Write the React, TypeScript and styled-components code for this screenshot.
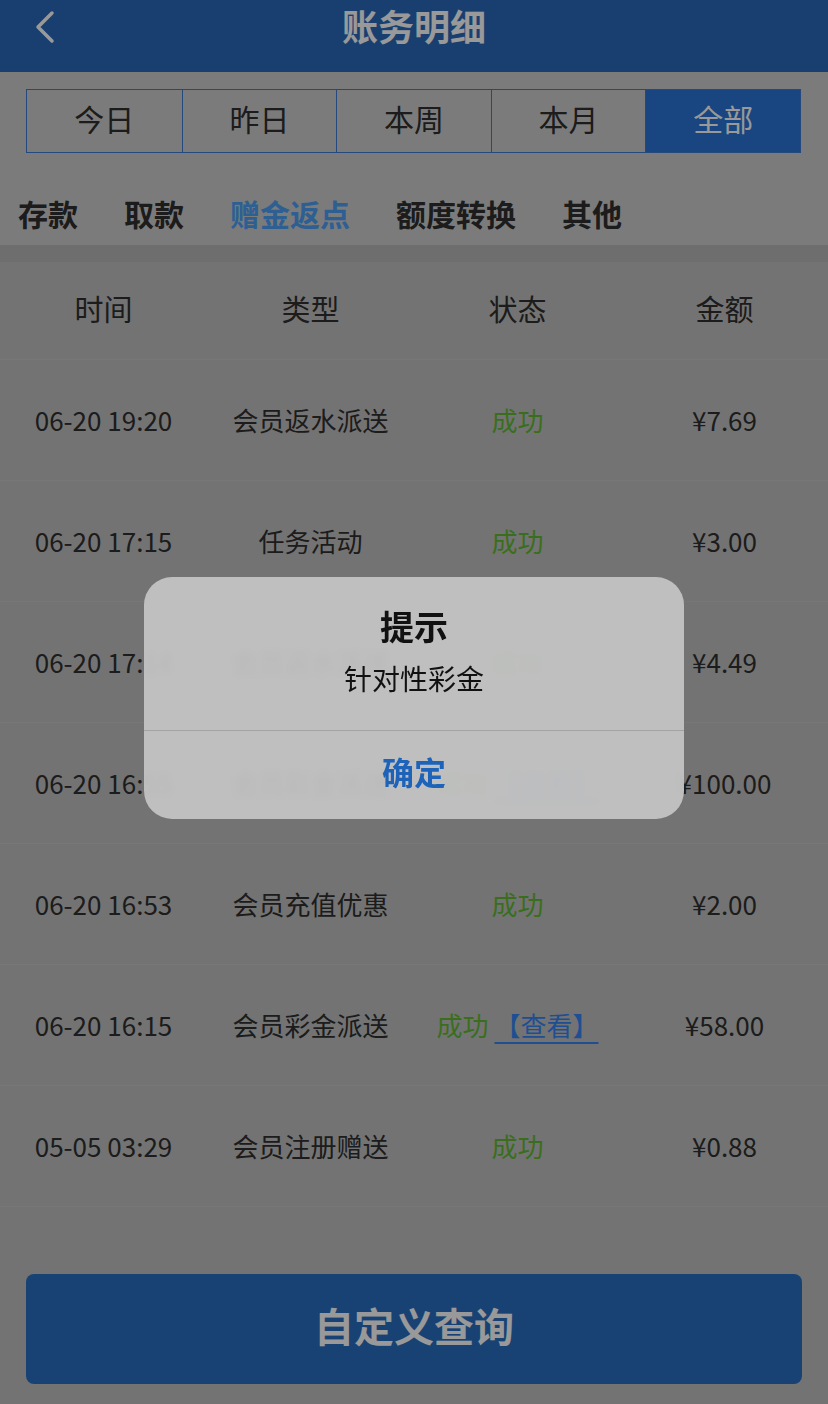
import React from 'react';
import styled, { createGlobalStyle } from 'styled-components';

const mainHex = '#2a6abb';
const textHex = '#2f2f2f';

const GlobalStyle = createGlobalStyle`
    html, body {
        margin: 0;
        padding: 0;
        background: #c0c0c0;
        font-family: "Noto Sans CJK SC", "Noto Sans", sans-serif;
    }
`;

const Page = styled.div`
    width: 828px;
    min-height: 1404px;
    background: #c0c0c0;
    display: flex;
    flex-direction: column;
`;

const Header = styled.div`
    height: 72px;
    background: ${mainHex};
    display: flex;
    justify-content: center;
    position: relative;
`;

const BackButton = styled.div`
    position: absolute;
    left: 32px;
    top: 9px;
    width: 26px;
    height: 36px;
`;

const HeaderTitle = styled.div`
    color: #ffffff;
    font-size: 36px;
    font-weight: bold;
    line-height: 50px;
`;

const TopArea = styled.div`
    background: #cdcdcd;
    padding-top: 17px;
`;

const Segment = styled.div`
    margin: 0 27px 0 26px;
    height: 64px;
    display: grid;
    grid-template-columns: repeat(5, 1fr);
    border: 1px solid #3f7bd2;
    box-sizing: border-box;
`;

const SegmentItem = styled.div<{ $active?: boolean; $first?: boolean }>`
    display: flex;
    align-items: center;
    justify-content: center;
    padding-bottom: 7px;
    font-size: 30px;
    color: ${p => (p.$active ? '#ffffff' : textHex)};
    background: ${p => (p.$active ? '#2b73d5' : 'transparent')};
    border-left: ${p => (p.$first ? 'none' : '1px solid #3f7bd2')};
`;

const CategoryRow = styled.div`
    display: flex;
    gap: 46px;
    padding: 30px 0 0 18px;
    height: 62px;
`;

const Category = styled.div<{ $active?: boolean }>`
    font-size: 30px;
    font-weight: bold;
    line-height: 60px;
    color: ${p => (p.$active ? '#4b9ff5' : textHex)};
`;

const Strip = styled.div`
    height: 17px;
    background: #b7b7b7;
`;

const Table = styled.div`
    display: flex;
    flex-direction: column;
`;

const Row = styled.div<{ $head?: boolean }>`
    display: grid;
    grid-template-columns: repeat(4, 1fr);
    height: ${p => (p.$head ? '98px' : '121px')};
    padding-bottom: ${p => (p.$head ? '6px' : '2px')};
    box-sizing: border-box;
    border-bottom: 1px solid #c6c6c6;
    align-items: center;
`;

const Cell = styled.div<{ $head?: boolean }>`
    text-align: center;
    font-size: ${p => (p.$head ? '29px' : '26px')};
    color: ${textHex};
    white-space: nowrap;
`;

const Status = styled.span`
    color: #62b830;
`;

const ViewLink = styled.span`
    color: #3484f3;
    text-decoration: underline;
    text-underline-offset: 6px;
    margin-left: 6px;
`;

const Footer = styled.div`
    padding: 67px 26px 19px 26px;
`;

const QueryButton = styled.div`
    height: 110px;
    padding-bottom: 9px;
    box-sizing: border-box;
    border-radius: 8px;
    background: #286ec0;
    color: #ffffff;
    font-size: 40px;
    font-weight: bold;
    display: flex;
    align-items: center;
    justify-content: center;
`;

const Mask = styled.div`
    position: fixed;
    inset: 0;
    background: rgba(0, 0, 0, 0.4);
    display: flex;
    align-items: center;
    justify-content: center;
`;

const Dialog = styled.div`
    width: 540px;
    margin-top: -8px;
    border-radius: 28px;
    background: rgba(196, 196, 196, 0.94);
    backdrop-filter: blur(3px);
    overflow: hidden;
    text-align: center;
`;

const DialogBody = styled.div`
    padding: 26px 20px 23px 20px;
    border-bottom: 1px solid #a3a3a3;
`;

const DialogTitle = styled.div`
    font-size: 34px;
    font-weight: bold;
    line-height: 46px;
    color: #111111;
`;

const DialogText = styled.div`
    font-size: 28px;
    line-height: 58px;
    color: #111111;
`;

const DialogButton = styled.div`
    height: 88px;
    line-height: 80px;
    font-size: 32px;
    font-weight: bold;
    color: #1d63b9;
`;

const ranges = ['今日', '昨日', '本周', '本月', '全部'];
const categories = ['存款', '取款', '赠金返点', '额度转换', '其他'];

const records = [
    { time: '06-20 19:20', type: '会员返水派送', link: false, amount: '¥7.69' },
    { time: '06-20 17:15', type: '任务活动', link: false, amount: '¥3.00' },
    { time: '06-20 17:14', type: '会员返水派送', link: false, amount: '¥4.49' },
    { time: '06-20 16:55', type: '会员彩金派送', link: true, amount: '¥100.00' },
    { time: '06-20 16:53', type: '会员充值优惠', link: false, amount: '¥2.00' },
    { time: '06-20 16:15', type: '会员彩金派送', link: true, amount: '¥58.00' },
    { time: '05-05 03:29', type: '会员注册赠送', link: false, amount: '¥0.88' },
];

function App() {
    return (
        <Page>
            <GlobalStyle />
            <Header>
                <BackButton>
                    <svg width="26" height="36" viewBox="0 0 26 36">
                        <path d="M20 4 L6 18 L20 32" stroke="#ffffff" strokeWidth="3.5" fill="none" strokeLinecap="round" strokeLinejoin="round" />
                    </svg>
                </BackButton>
                <HeaderTitle>账务明细</HeaderTitle>
            </Header>

            <TopArea>
                <Segment>
                    {ranges.map((r, i) => (
                        <SegmentItem key={r} $first={i === 0} $active={i === ranges.length - 1}>{r}</SegmentItem>
                    ))}
                </Segment>
                <CategoryRow>
                    {categories.map(c => (
                        <Category key={c} $active={c === '赠金返点'}>{c}</Category>
                    ))}
                </CategoryRow>
            </TopArea>
            <Strip />

            <Table>
                <Row $head>
                    <Cell $head>时间</Cell>
                    <Cell $head>类型</Cell>
                    <Cell $head>状态</Cell>
                    <Cell $head>金额</Cell>
                </Row>
                {records.map(r => (
                    <Row key={r.time}>
                        <Cell>{r.time}</Cell>
                        <Cell>{r.type}</Cell>
                        <Cell>
                            <Status>成功</Status>
                            {r.link && <ViewLink>【查看】</ViewLink>}
                        </Cell>
                        <Cell>{r.amount}</Cell>
                    </Row>
                ))}
            </Table>

            <Footer>
                <QueryButton>自定义查询</QueryButton>
            </Footer>

            <Mask>
                <Dialog>
                    <DialogBody>
                        <DialogTitle>提示</DialogTitle>
                        <DialogText>针对性彩金</DialogText>
                    </DialogBody>
                    <DialogButton>确定</DialogButton>
                </Dialog>
            </Mask>
        </Page>
    );
}

export default App;
